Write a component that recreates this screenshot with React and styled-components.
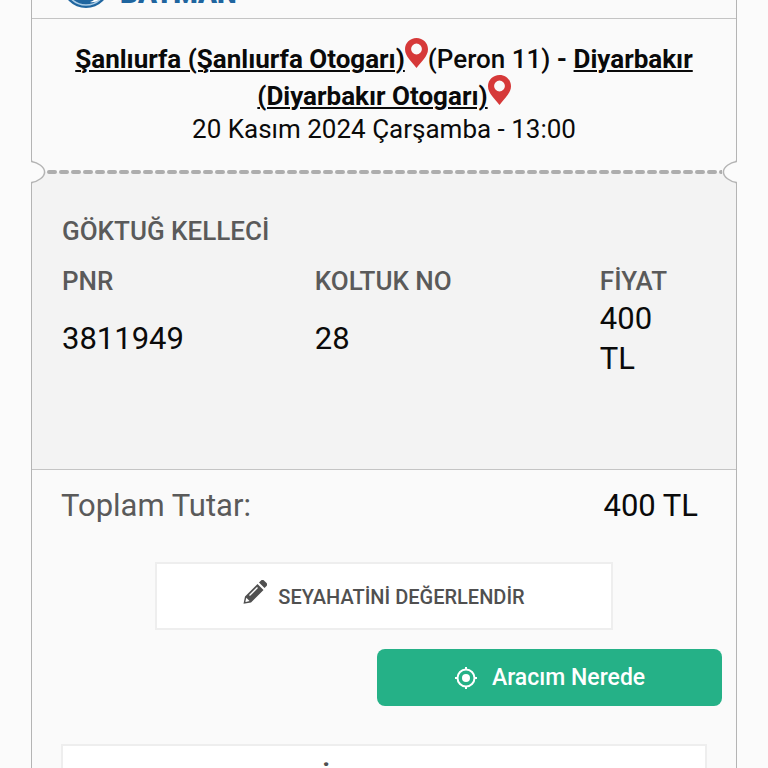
import React from 'react'
import styled, { createGlobalStyle } from 'styled-components'

const GlobalStyle = createGlobalStyle`
  * {
    box-sizing: border-box;
  }

  body {
    margin: 0;
    background-color: #fbfbfb;
    font-family: Roboto, 'Liberation Sans', sans-serif;
    color: #0a0a0a;
  }
`

const Page = styled.main`
  height: 100vh;
  padding: 0 31px;
  overflow: hidden;
`

const Ticket = styled.article`
  border: solid #b4b4b4;
  border-width: 0 1px;
  background-color: #fafafa;
`

const Header = styled.header`
  display: flex;
  align-items: flex-end;
  gap: 10px;
  height: 19px;
  padding: 0 30px 10px;
  border-bottom: 1px solid #c4c4c4;
`

const Emblem = styled.svg`
  flex: none;
  width: 48px;
  height: 48px;
`

const Brand = styled.span`
  color: #1f659f;
  font-size: 28px;
  font-weight: 900;
  line-height: 28px;
`

const Route = styled.section`
  padding: 19px 30px 14px;
  text-align: center;
  font-size: 26px;
`

const Stops = styled.h1`
  margin: 0;
  font-size: 26px;
  font-weight: 700;
  line-height: 32px;
`

const StopLink = styled.a`
  color: inherit;
  text-decoration: underline;
  text-decoration-thickness: 2px;
  text-underline-offset: 2px;
`

const Platform = styled.span`
  font-weight: 500;
`

const PinIcon = styled.svg`
  width: 23px;
  height: 30px;
`

const Departure = styled.p`
  margin: 0;
  line-height: 34px;
`

const Tear = styled.div`
  display: flex;
  justify-content: space-between;
  height: 24px;
  margin: 0 -1px;
  background: linear-gradient(#fafafa 50%, #f3f3f3 50%);
`

const NotchIcon = styled.svg`
  flex: none;
  width: 15px;
  height: 24px;
  transform: ${({ $flip }) => ($flip ? 'scaleX(-1)' : 'none')};
`

const Dashes = styled.svg`
  flex: 1;
  min-width: 0;
  height: 24px;
`

const Passenger = styled.section`
  min-height: 286px;
  padding: 27px 26px 27px 30px;
  border-bottom: 1px solid #c4c4c4;
  background-color: #f3f3f3;
`

const Name = styled.h2`
  margin: 0 0 12px;
  color: #5a5a5a;
  font-size: 26px;
  font-weight: 500;
  line-height: 40px;
`

const Details = styled.table`
  width: 100%;
  border-collapse: collapse;
  table-layout: fixed;
  text-align: left;
`

const Heading = styled.th`
  width: ${({ width }) => width};
  padding: 0;
  color: #5a5a5a;
  font-size: 26px;
  font-weight: 500;
  line-height: 36px;
`

const Value = styled.td`
  padding: 0 40px 0 0;
  font-size: 31px;
  line-height: 40px;
`

const Total = styled.div`
  display: flex;
  justify-content: space-between;
  padding: 16px 38px 36px 29px;
  font-size: 31px;
  line-height: 40px;
`

const TotalLabel = styled.span`
  color: #5a5a5a;
`

const Actions = styled.div`
  display: flex;
  flex-direction: column;
`

const Button = styled.button`
  border: 2px solid #eeeeee;
  background-color: #ffffff;
  color: #505050;
  font-family: inherit;
  font-weight: 500;
  cursor: pointer;
`

const Icon = styled.svg`
  flex: none;
  width: 24px;
  height: 24px;
`

const RateButton = styled(Button)`
  align-self: center;
  width: 65%;
  height: 68px;
  padding: 0 6px 4px;
  font-size: 20px;

  ${Icon} {
    margin-right: 11px;
  }
`

const TrackButton = styled(Button)`
  display: flex;
  align-items: center;
  justify-content: center;
  align-self: flex-end;
  gap: 14px;
  width: 49%;
  height: 57px;
  margin: 19px 14px 38px 0;
  border: 0;
  border-radius: 8px;
  background-color: #25b187;
  color: #ffffff;
  font-size: 23px;
`

const CancelButton = styled(Button)`
  height: 68px;
  margin: 0 29px;
  font-size: 30px;
  font-weight: 700;
`

const Pin = () => (
  <PinIcon viewBox="0 0 23 30" aria-hidden="true">
    <path
      d="M11.5 0C5 0 0 5 0 11.2 0 18.5 7 23.5 11.5 30 16 23.5 23 18.5 23 11.2 23 5 18 0 11.5 0Zm0 5.6a5.4 5.4 0 1 1 0 10.8 5.4 5.4 0 0 1 0-10.8Z"
      fill="#d63939"
      fillRule="evenodd"
    />
  </PinIcon>
)

const Notch = ({ flip }) => (
  <NotchIcon viewBox="0 0 15 24" $flip={flip} aria-hidden="true">
    <path d="M0 1C7 2 14 7 14 12S7 22 0 23Z" fill="#fbfbfb" />
    <path
      d="M.5 0V1.4C7 2.5 13.6 7 13.6 12S7 21.5 .5 22.6V24"
      fill="none"
      stroke="#b4b4b4"
      strokeWidth="1.5"
    />
  </NotchIcon>
)

const App = () => (
  <>
    <GlobalStyle />
    <Page>
      <Ticket>
        <Header>
          <Emblem viewBox="0 0 48 48" aria-hidden="true">
            <circle cx="24" cy="24" r="24" fill="#1f659f" />
            <circle cx="24" cy="24" r="21" fill="none" stroke="#a9cbe5" strokeWidth="1.5" />
            <path d="M28 42c3-1 6-3 8-6l3 2c-3 3-7 5-11 4Z" fill="#ffffff" />
          </Emblem>
          <Brand>BATMAN</Brand>
        </Header>
        <Route>
          <Stops>
            <StopLink href="#sanliurfa">Şanlıurfa (Şanlıurfa Otogarı)</StopLink>
            <Pin />
            <Platform>(Peron 11)</Platform>
            {' - '}
            <StopLink href="#diyarbakir">Diyarbakır (Diyarbakır Otogarı)</StopLink>
            <Pin />
          </Stops>
          <Departure>20 Kasım 2024 Çarşamba - 13:00</Departure>
        </Route>
        <Tear>
          <Notch />
          <Dashes aria-hidden="true">
            <line
              x1="3"
              y1="12"
              x2="100%"
              y2="12"
              stroke="#adadad"
              strokeWidth="4"
              strokeLinecap="round"
              strokeDasharray="6 6"
            />
          </Dashes>
          <Notch flip />
        </Tear>
        <Passenger>
          <Name>GÖKTUĞ KELLECİ</Name>
          <Details>
            <thead>
              <tr>
                <Heading width="39%">PNR</Heading>
                <Heading width="44%">KOLTUK NO</Heading>
                <Heading>FİYAT</Heading>
              </tr>
            </thead>
            <tbody>
              <tr>
                <Value>3811949</Value>
                <Value>28</Value>
                <Value>400 TL</Value>
              </tr>
            </tbody>
          </Details>
        </Passenger>
        <Total>
          <TotalLabel>Toplam Tutar:</TotalLabel>
          <span>400 TL</span>
        </Total>
        <Actions>
          <RateButton type="button">
            <Icon viewBox="0 0 24 24" aria-hidden="true">
              <path
                d="M2 16.5 14.5 4l6 6L8 22.5l-7.5 1.3ZM16 2.5l1.8-1.8a2.4 2.4 0 0 1 3.4 0l2.1 2.1a2.4 2.4 0 0 1 0 3.4L21.5 8Z"
                fill="currentColor"
              />
              <path d="m6.5 15.5 8-8" stroke="#ffffff" strokeWidth="1.3" />
              <path d="m3.3 17.8 3.3 3.3-3.8.8-.4-.5Z" fill="#ffffff" />
            </Icon>
            SEYAHATİNİ DEĞERLENDİR
          </RateButton>
          <TrackButton type="button">
            <Icon viewBox="0 0 24 24" fill="none" stroke="currentColor" strokeWidth="2" aria-hidden="true">
              <circle cx="12" cy="12" r="8.5" />
              <circle cx="12" cy="12" r="4" fill="currentColor" stroke="none" />
              <path d="M12 1v3M12 20v3M1 12h3M20 12h3" />
            </Icon>
            Aracım Nerede
          </TrackButton>
          <CancelButton type="button">İPTAL ET</CancelButton>
        </Actions>
      </Ticket>
    </Page>
  </>
)

export default App
